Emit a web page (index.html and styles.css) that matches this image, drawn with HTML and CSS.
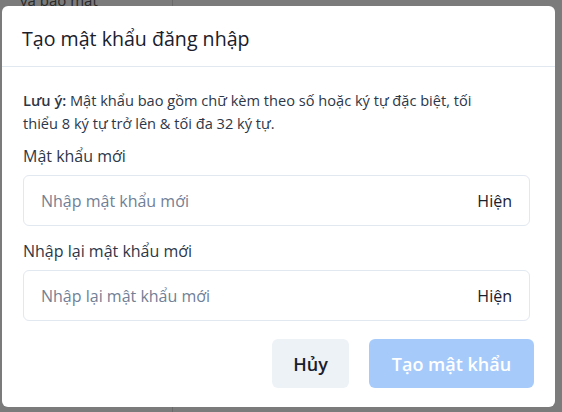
FILE: index.html
```html
<!DOCTYPE html>
<html lang="vi">
<head>
<meta charset="utf-8">
<link rel="stylesheet" href="styles.css">
</head>
<body>
<div class="backdrop">
  <div class="bg-text">và bảo mật</div>
  <div class="bg-line"></div>
  <div class="modal">
    <div class="modal-header">Tạo mật khẩu đăng nhập</div>
    <div class="modal-body">
      <p class="note"><b>Lưu ý:</b> Mật khẩu bao gồm chữ kèm theo số hoặc ký tự đặc biệt, tối thiểu 8 ký tự trở lên &amp; tối đa 32 ký tự.</p>
      <label class="label">Mật khẩu mới</label>
      <div class="field">
        <span class="placeholder">Nhập mật khẩu mới</span>
        <span class="toggle">Hiện</span>
      </div>
      <label class="label">Nhập lại mật khẩu mới</label>
      <div class="field">
        <span class="placeholder">Nhập lại mật khẩu mới</span>
        <span class="toggle">Hiện</span>
      </div>
    </div>
    <div class="modal-footer">
      <button class="btn btn-cancel">Hủy</button>
      <button class="btn btn-primary">Tạo mật khẩu</button>
    </div>
  </div>
</div>
</body>
</html>
```
FILE: styles.css
```css
* { box-sizing: border-box; }
html, body { margin: 0; padding: 0; }
body {
  width: 562px;
  height: 412px;
  overflow: hidden;
  font-family: "Open Sans", "Noto Sans", sans-serif;
  background: #7b7b7b;
}
.backdrop {
  position: relative;
  width: 562px;
  height: 412px;
  background: #7b7b7b;
  padding: 6px 7px 0 2px;
}
.bg-text {
  position: absolute;
  left: 20px;
  top: -6px;
  font-size: 15px;
  line-height: 12px;
  color: #2a2a2a;
}
.bg-line {
  position: absolute;
  left: 172px;
  top: 0;
  width: 1px;
  height: 412px;
  background: #6a6a6a;
}
.modal {
  position: relative;
  background: #fff;
  border-radius: 6px;
  width: 553px;
  height: 401px;
  display: flex;
  flex-direction: column;
}
.modal-header {
  height: 61px;
  padding: 19px 20px 0 20px;
  font-size: 19.6px;
  font-weight: 500;
  color: #1a202c;
  border-bottom: 1px solid #e2e8f0;
}
.modal-body {
  padding: 22px 25px 0 21px;
}
.note {
  margin: 0 0 10px;
  padding-right: 30px;
  font-size: 14.6px;
  line-height: 23px;
  color: #2d3748;
}
.note b { font-weight: 600; }
.label {
  display: block;
  font-size: 16px;
  line-height: 22px;
  color: #2d3748;
  margin-bottom: 8px;
}
.field {
  height: 51px;
  border: 1px solid #e2e8f0;
  border-radius: 6px;
  display: flex;
  align-items: center;
  justify-content: space-between;
  padding: 0 17px 0 17px;
  font-size: 16px;
  margin-bottom: 14px;
}
.placeholder { color: #718096; }
.toggle { color: #1a202c; }
.modal-footer {
  display: flex;
  justify-content: flex-end;
  gap: 20px;
  padding: 4px 21px 0 0;
}
.btn {
  height: 49px;
  border: none;
  border-radius: 6px;
  font-family: inherit;
  font-size: 18px;
  font-weight: 600;
  padding: 0 20px;
}
.btn-cancel {
  width: 77px;
  background: #edf2f7;
  color: #1a202c;
}
.btn-primary {
  width: 165px;
  background: #a6cbfb;
  color: #fff;
}
```
